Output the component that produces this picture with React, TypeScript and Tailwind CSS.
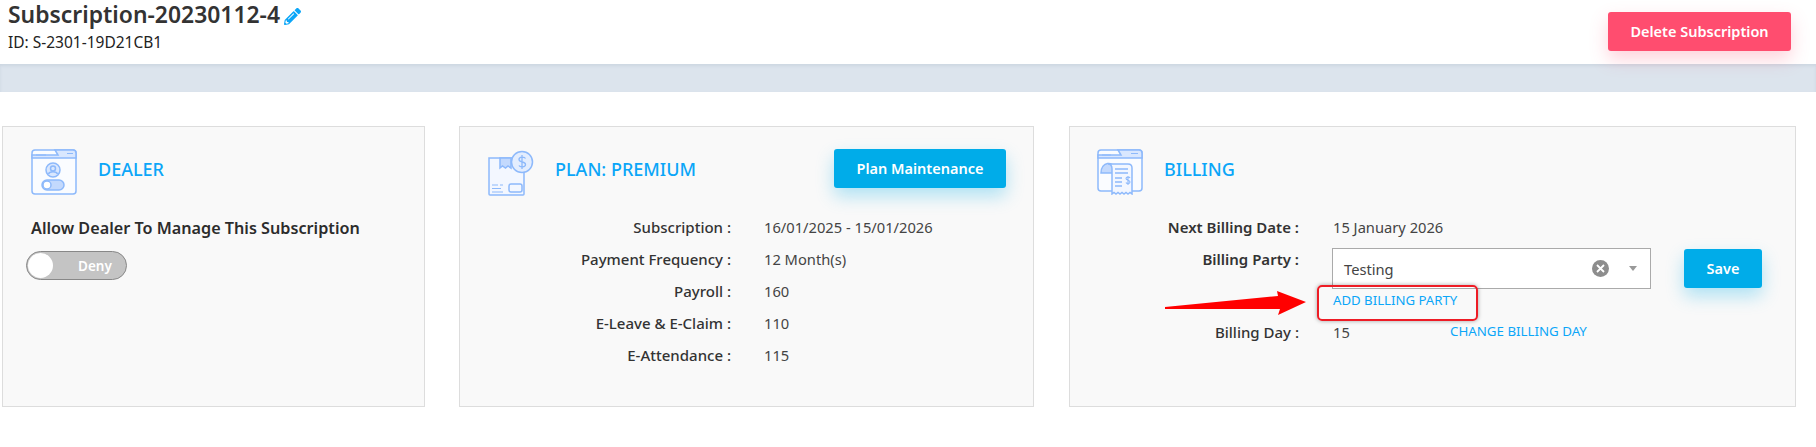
import { FaPencilAlt } from "react-icons/fa";

const planRows = [
  ["Subscription :", "16/01/2025 - 15/01/2026"],
  ["Payment Frequency :", "12 Month(s)"],
  ["Payroll :", "160"],
  ["E-Leave & E-Claim :", "110"],
  ["E-Attendance :", "115"],
];

const DealerIcon = () => (
  <svg width="46" height="46" viewBox="0 0 46 46" fill="none" stroke="#8db9fb" strokeWidth="1.5">
    <rect x="1" y="1" width="44" height="44" rx="3" fill="#fafcff" />
    <path d="M1 9h44V4a3 3 0 0 0-3-3H24l3 5H1z" fill="#d9e7fe" />
    <path d="M5 6h10M36 4.500h6" strokeWidth="1.200" />
    <circle cx="22" cy="21" r="7" fill="#d9e7fe" />
    <circle cx="22" cy="19.500" r="2.500" />
    <path d="M17.500 25c1-3 8-3 9 0" />
    <rect x="11" y="31" width="22" height="10" rx="5" fill="#c3d9fd" />
    <circle cx="16" cy="36" r="4" fill="#fff" />
  </svg>
);

const PlanIcon = () => (
  <svg width="46" height="46" viewBox="0 0 46 46" fill="none" stroke="#8db9fb" strokeWidth="1.5">
    <path d="M1 8h35v36a1 1 0 0 1-1 1H2a1 1 0 0 1-1-1z" fill="#f3f7ff" />
    <path d="M12 8h11v10l-3-2-2.500 2-3-2-2.500 2z" fill="#c3d9fd" />
    <circle cx="34" cy="12" r="10.500" fill="#e3edfe" />
    <path d="M37.500 8.500c-1-2-6.500-2-6.500 1 0 3.500 6.500 1.500 6.500 5 0 3-5.500 3-6.500 1M34 5v14" strokeWidth="1.300" />
    <rect x="21" y="34" width="13" height="8" rx="2" />
    <path d="M4 35h6M12 35h3M4 38.500h9M4 42h11" strokeWidth="1.200" />
  </svg>
);

const BillingIcon = () => (
  <svg width="46" height="46" viewBox="0 0 46 46" fill="none" stroke="#8db9fb" strokeWidth="1.5">
    <rect x="1" y="1" width="44" height="41" rx="3" fill="#fafcff" />
    <path d="M1 9h44V4a3 3 0 0 0-3-3H21l3 5H1z" fill="#d9e7fe" />
    <path d="M5 6h9M34 4.500h7" strokeWidth="1.200" />
    <path d="M4 24c0-12 13-12 13-4v4z" fill="#c3d9fd" />
    <path d="M11 15h20c3 0 4 2 4 4v26l-2-1.500-2 1.500-2-1.500-2 1.500-2-1.500-2 1.500-2-1.500-2 1.500-2-1.500-2 1.500V20c0-3-1-5-4-5z" fill="#f3f7ff" />
    <path d="M18 20h13M18 24h13M18 29h7M18 33h7M18 37h7" strokeWidth="1.300" />
    <path d="M33 29c-.500-1.500-4-1.500-4 .5s4 1.500 4 3.500-3.500 2-4 .5M31 27v9" strokeWidth="1.100" />
  </svg>
);

const CardTitle = ({ children }: { children: string }) => (
  <h2 className="-mt-1.5 text-[18px] font-medium text-[#0ba6f8]">{children}</h2>
);

const App = () => {
  return (
    <div className="h-[447px] w-[1816px] overflow-hidden bg-white font-['Noto_Sans','Open_Sans',sans-serif] text-[15px] text-[#333]">
      <header className="flex h-16 items-start justify-between pl-2 pr-[25px]">
        <div>
          <div className="-mt-px flex items-center gap-[4px]">
            <h1 className="text-[22.900px] font-semibold leading-[32px] text-[#333]">Subscription-20230112-4</h1>
            <FaPencilAlt size={17} color="#0ba6f8" className="mt-0.5" />
          </div>
          <p className="mt-px text-[15.500px] leading-5 text-[#222]">ID: S-2301-19D21CB1</p>
        </div>
        <button className="mt-3 h-[39px] w-[183px] rounded-[3px] bg-[#ff4d6f] text-[14.500px] font-semibold text-white shadow-[0_8px_18px_rgba(255,77,111,0.25)]">
          Delete Subscription
        </button>
      </header>
      <div className="h-7 bg-[#dce4ed] shadow-[inset_0_2px_3px_rgba(120,140,160,0.15)]" />

      <main className="mt-[34px] flex gap-[34px] pl-0.5">
        <section className="h-[281px] w-[423px] border border-[#ddd] bg-[#f9f9f9] pl-7 pt-[22px]">
          <div className="flex items-center gap-[21px]">
            <DealerIcon />
            <CardTitle>DEALER</CardTitle>
          </div>
          <p className="mt-[21px] text-[16.200px] font-semibold text-[#2c2c2c]">Allow Dealer To Manage This Subscription</p>
          <div className="-ml-[5px] mt-[11px] flex h-[29px] w-[101px] items-center rounded-full border border-[#888] bg-[#c4c4c4] pl-px">
            <span className="h-[25px] w-[25px] rounded-full bg-white" />
            <span className="ml-[25px] text-[13.500px] font-semibold text-white">Deny</span>
          </div>
        </section>

        <section className="h-[281px] w-[575px] border border-[#ddd] bg-[#f9f9f9] pl-7 pr-[27px] pt-[22px]">
          <div className="flex items-center justify-between">
            <div className="flex items-center gap-[21px]">
              <PlanIcon />
              <CardTitle>PLAN: PREMIUM</CardTitle>
            </div>
            <button className="mb-2 h-[39px] w-[172px] rounded-[3px] bg-[#00ace9] text-[14.500px] font-semibold text-white shadow-[0_8px_18px_rgba(0,172,233,0.3)]">
              Plan Maintenance
            </button>
          </div>
          <div className="mt-[15px] flex flex-col">
            {planRows.map(([label, value]) => (
              <div key={label} className="flex h-8 items-center">
                <span className="w-[243px] text-right font-medium text-[#333]">{label}</span>
                <span className="ml-[33px] text-[14.700px] text-[#444]">{value}</span>
              </div>
            ))}
          </div>
        </section>

        <section className="relative ml-px h-[281px] w-[727px] border border-[#ddd] bg-[#f9f9f9] pl-[27px] pt-[22px]">
          <div className="flex items-center gap-[21px]">
            <BillingIcon />
            <CardTitle>BILLING</CardTitle>
          </div>
          <div className="mt-4 flex h-8 items-center">
            <span className="w-[202px] text-right font-semibold text-[#333]">Next Billing Date :</span>
            <span className="ml-[34px] text-[14.700px] text-[#444]">15 January 2026</span>
          </div>
          <div className="mt-1 flex items-start">
            <span className="w-[202px] pt-[2px] text-right font-semibold leading-5 text-[#333]">Billing Party :</span>
            <div className="ml-[33px] mt-[1px]">
              <div className="flex h-[41px] w-[319px] items-center border border-[#aaa] bg-white pl-[11px] pr-[13px] text-[14.700px] text-[#444]">
                <span className="flex-1 pt-0.5">Testing</span>
                <span className="flex h-[17px] w-[17px] items-center justify-center rounded-full bg-[#8d8d8d] text-white">
                  <svg width="9" height="9" viewBox="0 0 9 9" stroke="#fff" strokeWidth="1.800"><path d="M1 1l7 7M8 1l-7 7" /></svg>
                </span>
                <span className="ml-[20px] h-0 w-0 border-x-[4px] border-t-[5px] border-x-transparent border-t-[#999]" />
              </div>
              <a className="ml-px mt-[1px] block h-[26px] text-[13.200px] leading-[20px] text-[#0ba6f8]">ADD BILLING PARTY</a>
            </div>
            <button className="ml-[33px] mt-[2px] h-[39px] w-[78px] rounded-[3px] bg-[#00ace9] font-semibold text-[14.500px] text-white shadow-[0_8px_18px_rgba(0,172,233,0.3)]">
              Save
            </button>
          </div>
          <div className="flex h-8 items-center">
            <span className="w-[202px] text-right font-medium text-[#333]">Billing Day :</span>
            <span className="ml-[34px] w-[117px] text-[14.700px] text-[#444]">15</span>
            <a className="text-[13.300px] text-[#0ba6f8]">CHANGE BILLING DAY</a>
          </div>

          {/* annotation on top of the screenshot */}
          <div className="absolute left-[247px] top-[158px] h-[36px] w-[161px] rounded-[5px] border-2 border-[#ee1c25] shadow-[0_0_4px_rgba(0,0,0,0.35)]" />
          <svg className="absolute left-[95px] top-[158px]" width="142" height="32" viewBox="0 0 142 32">
            <path d="M0 22L113 11 112 6 141 17 113 30 115 24 0 24z" fill="#ff0000" />
          </svg>
        </section>
      </main>
    </div>
  );
};

export default App;
